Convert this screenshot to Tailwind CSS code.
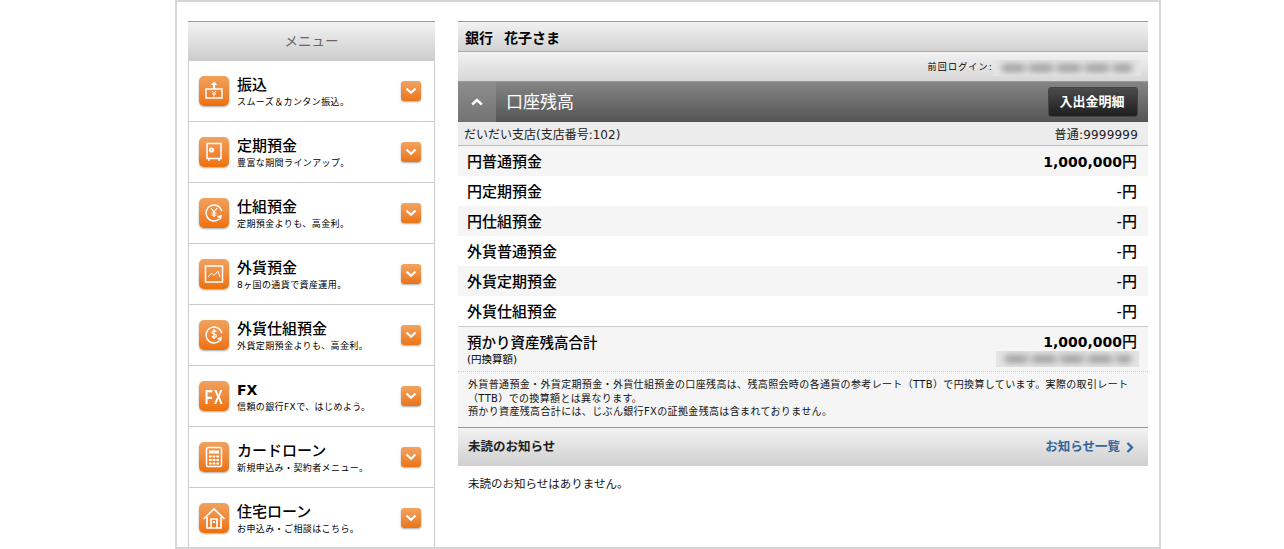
<!DOCTYPE html>
<html lang="ja">

<head>
    <meta charset="UTF-8">
    <meta name="viewport" content="width=device-width, initial-scale=1.0">
    <title>口座残高</title>
    <script src="https://cdn.jsdelivr.net/npm/@tailwindcss/browser@4"></script>
</head>

<body class="bg-white text-black font-['DejaVu_Sans','Noto_Sans_CJK_JP',sans-serif] overflow-hidden">

    <div class="ml-[175px] w-[986px] h-[549px] border-2 border-[#d6d6d6] overflow-hidden flex gap-[23px] pl-[11px] pt-[19px]">

        <!-- Sidebar -->
        <aside class="w-[247px] h-[600px] shrink-0 border-x border-[#cccccc]">
            <div class="h-[40px] -mx-px border-t border-t-[#999999] bg-gradient-to-b from-[#f3f3f3] to-[#cccccc] flex items-center justify-center text-[13.500px] text-[#666666]">メニュー</div>

            <a class="h-[61px] border-b border-[#cccccc] flex items-center pl-[10px] pr-[13px]">
                <span class="w-[30px] h-[30px] rounded-[5px] bg-gradient-to-b from-[#f0a25c] to-[#ee7000] shadow-[0_1px_2px_#0005] shrink-0 flex items-center justify-center">
                    <svg width="22" height="22" viewBox="0 0 22 22" fill="none" stroke="#fff" stroke-width="1.500"><path d="M3 9h16v9H3z"/><path d="M11 1.500 7.800 5h2.100v4h2.200V5h2.100z" fill="#fff" stroke="none"/><path d="M9 11l2 2.500 2-2.500M11 13.500V16.500M9.200 14h3.600" stroke-width="1"/></svg>
                </span>
                <span class="ml-[8px] flex-1 min-w-0 pt-[4px]">
                    <span class="block text-[15px] leading-[19px] font-medium">振込</span>
                    <span class="block text-[9px] leading-[15px] tracking-[0.4px] whitespace-nowrap">スムーズ＆カンタン振込。</span>
                </span>
                <span class="w-[20px] h-[20px] rounded-[3px] bg-gradient-to-b from-[#f2a45e] to-[#ea7410] shadow-[0_1px_2px_#0005] shrink-0 flex items-center justify-center">
                    <svg width="12" height="8" viewBox="0 0 12 8" fill="none" stroke="#fff" stroke-width="2.200"><path d="M1.500 1.500 6 5.800l4.500-4.300"/></svg>
                </span>
            </a>

            <a class="h-[61px] border-b border-[#cccccc] flex items-center pl-[10px] pr-[13px]">
                <span class="w-[30px] h-[30px] rounded-[5px] bg-gradient-to-b from-[#f0a25c] to-[#ee7000] shadow-[0_1px_2px_#0005] shrink-0 flex items-center justify-center">
                    <svg width="22" height="22" viewBox="0 0 22 22" fill="none" stroke="#fff" stroke-width="1.500"><path d="M4 2.500h14v15H4zM6 17.500V20M16 17.500V20"/><circle cx="8.500" cy="9" r="1.800" fill="#fff" fill-opacity=".5"/></svg>
                </span>
                <span class="ml-[8px] flex-1 min-w-0 pt-[4px]">
                    <span class="block text-[15px] leading-[19px] font-medium">定期預金</span>
                    <span class="block text-[9px] leading-[15px] tracking-[0.4px] whitespace-nowrap">豊富な期間ラインアップ。</span>
                </span>
                <span class="w-[20px] h-[20px] rounded-[3px] bg-gradient-to-b from-[#f2a45e] to-[#ea7410] shadow-[0_1px_2px_#0005] shrink-0 flex items-center justify-center">
                    <svg width="12" height="8" viewBox="0 0 12 8" fill="none" stroke="#fff" stroke-width="2.200"><path d="M1.500 1.500 6 5.800l4.500-4.300"/></svg>
                </span>
            </a>

            <a class="h-[61px] border-b border-[#cccccc] flex items-center pl-[10px] pr-[13px]">
                <span class="w-[30px] h-[30px] rounded-[5px] bg-gradient-to-b from-[#f0a25c] to-[#ee7000] shadow-[0_1px_2px_#0005] shrink-0 flex items-center justify-center">
                    <svg width="22" height="22" viewBox="0 0 22 22" fill="none" stroke="#fff" stroke-width="1.500"><path d="M16.500 16.800A8 8 0 1 1 18.800 9"/><path d="M14 14.500l5-2-1 5z" fill="#fff" stroke="none"/><path d="M8 6l3 4 3-4M11 10v5M8.500 11h5M8.500 13h5" stroke-width="1.200"/></svg>
                </span>
                <span class="ml-[8px] flex-1 min-w-0 pt-[4px]">
                    <span class="block text-[15px] leading-[19px] font-medium">仕組預金</span>
                    <span class="block text-[9px] leading-[15px] tracking-[0.4px] whitespace-nowrap">定期預金よりも、高金利。</span>
                </span>
                <span class="w-[20px] h-[20px] rounded-[3px] bg-gradient-to-b from-[#f2a45e] to-[#ea7410] shadow-[0_1px_2px_#0005] shrink-0 flex items-center justify-center">
                    <svg width="12" height="8" viewBox="0 0 12 8" fill="none" stroke="#fff" stroke-width="2.200"><path d="M1.500 1.500 6 5.800l4.500-4.300"/></svg>
                </span>
            </a>

            <a class="h-[61px] border-b border-[#cccccc] flex items-center pl-[10px] pr-[13px]">
                <span class="w-[30px] h-[30px] rounded-[5px] bg-gradient-to-b from-[#f0a25c] to-[#ee7000] shadow-[0_1px_2px_#0005] shrink-0 flex items-center justify-center">
                    <svg width="22" height="22" viewBox="0 0 22 22" fill="none" stroke="#fff" stroke-width="1.500"><path d="M2.500 3h17v16h-17z"/><path d="M5 14l3.500-4 2.500 2.500L15 8l2 6" stroke-width="1"/></svg>
                </span>
                <span class="ml-[8px] flex-1 min-w-0 pt-[4px]">
                    <span class="block text-[15px] leading-[19px] font-medium">外貨預金</span>
                    <span class="block text-[9px] leading-[15px] tracking-[0.4px] whitespace-nowrap">8ヶ国の通貨で資産運用。</span>
                </span>
                <span class="w-[20px] h-[20px] rounded-[3px] bg-gradient-to-b from-[#f2a45e] to-[#ea7410] shadow-[0_1px_2px_#0005] shrink-0 flex items-center justify-center">
                    <svg width="12" height="8" viewBox="0 0 12 8" fill="none" stroke="#fff" stroke-width="2.200"><path d="M1.500 1.500 6 5.800l4.500-4.300"/></svg>
                </span>
            </a>

            <a class="h-[61px] border-b border-[#cccccc] flex items-center pl-[10px] pr-[13px]">
                <span class="w-[30px] h-[30px] rounded-[5px] bg-gradient-to-b from-[#f0a25c] to-[#ee7000] shadow-[0_1px_2px_#0005] shrink-0 flex items-center justify-center">
                    <svg width="22" height="22" viewBox="0 0 22 22" fill="none" stroke="#fff" stroke-width="1.500"><path d="M16.500 16.800A8 8 0 1 1 18.800 9"/><path d="M14 14.500l5-2-1 5z" fill="#fff" stroke="none"/><path d="M13.500 7.500c-1-1-4.500-1-4.500 1s4.500 1.200 4.500 3.200-3.500 2-4.800.8M11 5v10" stroke-width="1.200"/></svg>
                </span>
                <span class="ml-[8px] flex-1 min-w-0 pt-[4px]">
                    <span class="block text-[15px] leading-[19px] font-medium">外貨仕組預金</span>
                    <span class="block text-[9px] leading-[15px] tracking-[0.4px] whitespace-nowrap">外貨定期預金よりも、高金利。</span>
                </span>
                <span class="w-[20px] h-[20px] rounded-[3px] bg-gradient-to-b from-[#f2a45e] to-[#ea7410] shadow-[0_1px_2px_#0005] shrink-0 flex items-center justify-center">
                    <svg width="12" height="8" viewBox="0 0 12 8" fill="none" stroke="#fff" stroke-width="2.200"><path d="M1.500 1.500 6 5.800l4.500-4.300"/></svg>
                </span>
            </a>

            <a class="h-[61px] border-b border-[#cccccc] flex items-center pl-[10px] pr-[13px]">
                <span class="w-[30px] h-[30px] rounded-[5px] bg-gradient-to-b from-[#f0a25c] to-[#ee7000] shadow-[0_1px_2px_#0005] shrink-0 flex items-center justify-center">
                    <span class="text-white text-[21px] leading-none font-['Liberation_Sans',sans-serif] font-bold tracking-[2px] scale-x-[0.62]">FX</span>
                </span>
                <span class="ml-[8px] flex-1 min-w-0 pt-[4px]">
                    <span class="block text-[14px] leading-[19px] font-bold">FX</span>
                    <span class="block text-[9px] leading-[15px] tracking-[0.4px] whitespace-nowrap">信頼の銀行FXで、はじめよう。</span>
                </span>
                <span class="w-[20px] h-[20px] rounded-[3px] bg-gradient-to-b from-[#f2a45e] to-[#ea7410] shadow-[0_1px_2px_#0005] shrink-0 flex items-center justify-center">
                    <svg width="12" height="8" viewBox="0 0 12 8" fill="none" stroke="#fff" stroke-width="2.200"><path d="M1.500 1.500 6 5.800l4.500-4.300"/></svg>
                </span>
            </a>

            <a class="h-[61px] border-b border-[#cccccc] flex items-center pl-[10px] pr-[13px]">
                <span class="w-[30px] h-[30px] rounded-[5px] bg-gradient-to-b from-[#f0a25c] to-[#ee7000] shadow-[0_1px_2px_#0005] shrink-0 flex items-center justify-center">
                    <svg width="22" height="22" viewBox="0 0 22 22" fill="none" stroke="#fff" stroke-width="1.500"><rect x="3.500" y="1.500" width="15" height="19" rx="1.500"/><path d="M6 4.500h10v3H6z" fill="#fff" stroke="none"/><path d="M6 9.500h10v2H6zM6 13h10v2H6zM6 16.500h10v2H6z" fill="#fff" stroke="none"/><path d="M9.200 9v10M12.800 9v10" stroke="#ef8a30" stroke-width="1"/></svg>
                </span>
                <span class="ml-[8px] flex-1 min-w-0 pt-[4px]">
                    <span class="block text-[15px] leading-[19px] font-medium">カードローン</span>
                    <span class="block text-[9px] leading-[15px] tracking-[0.4px] whitespace-nowrap">新規申込み・契約者メニュー。</span>
                </span>
                <span class="w-[20px] h-[20px] rounded-[3px] bg-gradient-to-b from-[#f2a45e] to-[#ea7410] shadow-[0_1px_2px_#0005] shrink-0 flex items-center justify-center">
                    <svg width="12" height="8" viewBox="0 0 12 8" fill="none" stroke="#fff" stroke-width="2.200"><path d="M1.500 1.500 6 5.800l4.500-4.300"/></svg>
                </span>
            </a>

            <a class="h-[61px] border-b border-[#cccccc] flex items-center pl-[10px] pr-[13px]">
                <span class="w-[30px] h-[30px] rounded-[5px] bg-gradient-to-b from-[#f0a25c] to-[#ee7000] shadow-[0_1px_2px_#0005] shrink-0 flex items-center justify-center">
                    <svg width="24" height="24" viewBox="0 0 24 24" fill="none" stroke="#fff" stroke-width="1.700"><path d="M1.500 13 12 3l10.500 10"/><path d="M5 11v11h14V11"/><path d="M9 22v-9h6v9"/><rect x="11" y="15" width="2" height="2" fill="#fff" stroke="none"/></svg>
                </span>
                <span class="ml-[8px] flex-1 min-w-0 pt-[4px]">
                    <span class="block text-[15px] leading-[19px] font-medium">住宅ローン</span>
                    <span class="block text-[9px] leading-[15px] tracking-[0.4px] whitespace-nowrap">お申込み・ご相談はこちら。</span>
                </span>
                <span class="w-[20px] h-[20px] rounded-[3px] bg-gradient-to-b from-[#f2a45e] to-[#ea7410] shadow-[0_1px_2px_#0005] shrink-0 flex items-center justify-center">
                    <svg width="12" height="8" viewBox="0 0 12 8" fill="none" stroke="#fff" stroke-width="2.200"><path d="M1.500 1.500 6 5.800l4.500-4.300"/></svg>
                </span>
            </a>
        </aside>

        <!-- Main -->
        <main class="w-[690px] shrink-0">
            <div class="h-[31px] border-y border-t-[#999999] border-b-[#aaaaaa] bg-gradient-to-b from-[#f2f2f2] to-[#d2d2d2] flex items-center pl-[7px] pt-[3px] text-[14px] font-bold"><span>銀行</span><span class="ml-[11px]">花子さま</span></div>

            <div class="h-[30px] border-b border-[#999999] bg-gradient-to-b from-[#f2f2f2] to-[#d6d6d6] flex items-center justify-end pr-[7px] pt-[3px] text-[9px] tracking-[1.200px]">
                <span>前回ログイン:</span>
                <span class="w-[148px] h-[16px] bg-[#e4e4e4] flex items-center justify-center overflow-hidden" aria-hidden="true">
                    <span class="w-[130px] h-[8px] bg-[repeating-linear-gradient(90deg,#a0a0a0_0_22px,#d0d0d0_22px_28px)] blur-[3px]"></span>
                </span>
            </div>

            <!-- Balance header -->
            <div class="h-[40px] bg-gradient-to-b from-[#858585] to-[#555555] flex items-center">
                <span class="w-[38px] h-full bg-gradient-to-b from-[#8e8e8e] to-[#737373] flex items-center justify-center">
                    <svg width="12" height="8" viewBox="0 0 12 8" fill="none" stroke="#fff" stroke-width="2.400"><path d="M1.200 6.500 6 2l4.800 4.500"/></svg>
                </span>
                <span class="ml-[10px] pt-[2px] text-[17px] text-white">口座残高</span>
                <a class="ml-auto mr-[10px] w-[90px] h-[30px] rounded-[3px] border border-[#444444] bg-gradient-to-b from-[#4c4c4c] to-[#1f1f1f] flex items-center justify-center pr-[2px] text-white text-[13px] font-bold">入出金明細</a>
            </div>

            <div class="h-[24px] border-b border-[#bbbbbb] bg-[#ececec] flex items-center justify-between pl-[6px] pr-[10px] pt-[2px] text-[12px] text-[#222222]">
                <span>だいだい支店(支店番号:102)</span>
                <span class="tracking-[0.2px]">普通:9999999</span>
            </div>

            <!-- Balances -->
            <div class="h-[30px] pt-[2px] bg-[#f5f5f5] flex items-center justify-between pl-[9px] pr-[11px] text-[15px]">
                <span class="font-medium">円普通預金</span><span class="font-medium"><span class="text-[14px] font-bold">1,000,000</span>円</span>
            </div>
            <div class="h-[30px] pt-[2px] flex items-center justify-between pl-[9px] pr-[11px] text-[15px]">
                <span class="font-medium">円定期預金</span><span class="font-medium">-円</span>
            </div>
            <div class="h-[30px] pt-[2px] bg-[#f5f5f5] flex items-center justify-between pl-[9px] pr-[11px] text-[15px]">
                <span class="font-medium">円仕組預金</span><span class="font-medium">-円</span>
            </div>
            <div class="h-[30px] pt-[2px] flex items-center justify-between pl-[9px] pr-[11px] text-[15px]">
                <span class="font-medium">外貨普通預金</span><span class="font-medium">-円</span>
            </div>
            <div class="h-[30px] pt-[2px] bg-[#f5f5f5] flex items-center justify-between pl-[9px] pr-[11px] text-[15px]">
                <span class="font-medium">外貨定期預金</span><span class="font-medium">-円</span>
            </div>
            <div class="h-[30px] pt-[2px] flex items-center justify-between pl-[9px] pr-[11px] text-[15px]">
                <span class="font-medium">外貨仕組預金</span><span class="font-medium">-円</span>
            </div>

            <!-- Total -->
            <div class="h-[46px] border-y border-[#cccccc] [border-bottom-style:dotted] bg-[#f5f5f5] flex justify-between pl-[9px] pr-[11px] pt-[6px]">
                <div>
                    <div class="text-[14.500px] leading-[20px] font-medium">預かり資産残高合計</div>
                    <div class="text-[10.500px] leading-[13px]">(円換算額)</div>
                </div>
                <div class="flex flex-col items-end">
                    <div class="text-[15px] leading-[18px] font-medium"><span class="text-[14px] font-bold">1,000,000</span>円</div>
                    <div class="w-[143px] h-[16px] -mr-[2px] bg-[#e4e4e4] flex items-center justify-center overflow-hidden" aria-hidden="true">
                        <span class="w-[126px] h-[8px] bg-[repeating-linear-gradient(90deg,#a0a0a0_0_22px,#d0d0d0_22px_28px)] blur-[3px]"></span>
                    </div>
                </div>
            </div>

            <div class="h-[55px] bg-[#f5f5f5] pl-[10px] pr-[8px] pt-[6px] text-[10px] leading-[13.500px] tracking-[0.350px] text-[#111111]">
                外貨普通預金・外貨定期預金・外貨仕組預金の口座残高は、残高照会時の各通貨の参考レート（TTB）で円換算しています。実際の取引レート（TTB）での換算額とは異なります。<br>
                預かり資産残高合計には、じぶん銀行FXの証拠金残高は含まれておりません。
            </div>

            <!-- Notices -->
            <div class="h-[39px] border-t border-[#999999] bg-gradient-to-b from-[#f3f3f3] to-[#cfcfcf] flex items-center justify-between pl-[10px] pr-[14px]">
                <span class="text-[12.500px] font-bold text-[#222222]">未読のお知らせ</span>
                <span class="flex items-center gap-[6px] text-[12.500px] font-bold text-[#336699]">お知らせ一覧
                    <svg width="8" height="11" viewBox="0 0 8 11" fill="none" stroke="#336699" stroke-width="2.200"><path d="M1.500 1 6 5.500 1.500 10"/></svg>
                </span>
            </div>
            <p class="pl-[10px] pt-[10px] text-[11.500px] leading-[16px] text-[#111111]">未読のお知らせはありません。</p>
        </main>
    </div>

</body>

</html>
